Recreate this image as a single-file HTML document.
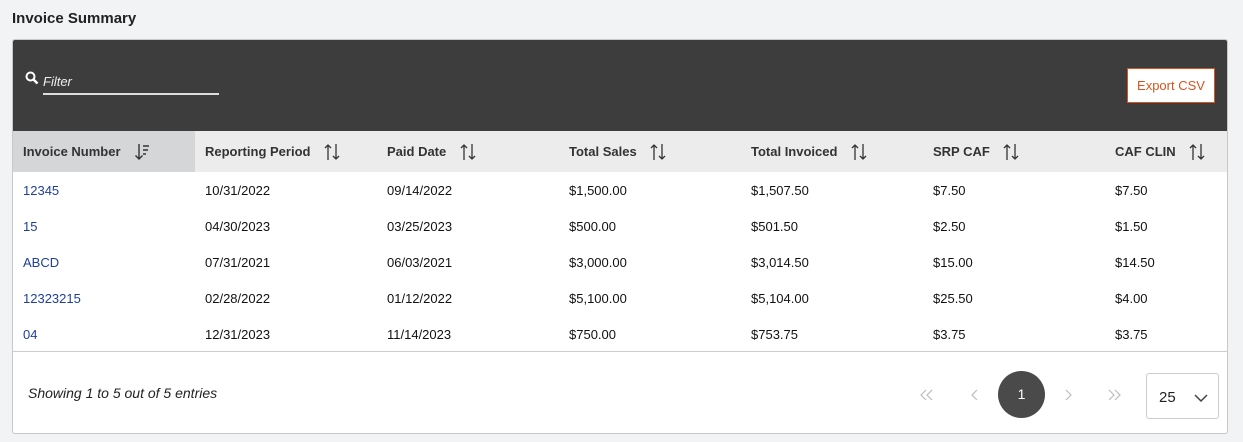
<!DOCTYPE html>
<html><head><style>
*{box-sizing:border-box;margin:0;padding:0}
body{width:1243px;height:442px;background:#f2f3f5;font-family:"Liberation Sans",sans-serif;position:relative;overflow:hidden;color:#222}
h1{position:absolute;left:12px;top:10px;font-size:15px;font-weight:bold;color:#222}
.card{position:absolute;left:12px;top:39px;width:1216px;height:395px;background:#fff;border:1px solid #c8c8c8;border-radius:3px;overflow:hidden}
.bar{height:91px;background:#3d3d3d;position:relative}
.filter{position:absolute;left:30px;top:34px;width:176px;border-bottom:2px solid #ddd;color:#eee;font-style:italic;font-size:13px;padding-bottom:4px}
.srch{position:absolute;left:12px;top:31px}
.exp{position:absolute;left:1114px;top:28px;width:88px;height:35px;background:#fff;border:1px solid #d9531e;color:#d9531e;font-size:13px;text-align:center;line-height:33px}
table{border-collapse:collapse;width:1216px;table-layout:fixed}
th{background:#ececec;height:41px;text-align:left;font-size:13px;font-weight:bold;color:#333;padding-left:10px;padding-top:2px;white-space:nowrap}
th:first-child{background:#d5d6d8}
th svg{vertical-align:middle;margin-left:10px;margin-top:-3px}
td{height:36px;font-size:13px;padding-left:10px;color:#111}
td a{color:#1f3f99;text-decoration:none}
.foot{position:absolute;top:311px;left:0;right:0;bottom:0;border-top:1px solid #ccc}
.show{position:absolute;left:15px;top:33px;font-style:italic;font-size:14px;color:#222}
.pg{position:absolute;top:37px}
.cur{position:absolute;left:985px;top:19px;width:47px;height:47px;border-radius:50%;background:#4a4a4a;color:#fff;text-align:center;line-height:47px;font-size:14px}
.sel{position:absolute;left:1133px;top:21px;width:73px;height:46px;border:1px solid #ccc;border-radius:3px;font-size:15px;padding:15px 0 0 12px}
</style></head><body>
<h1>Invoice Summary</h1>
<div class="card">
<div class="bar">
<svg class="srch" width="14" height="14" viewBox="0 0 14 14"><circle cx="5.5" cy="5.5" r="4" stroke="#fff" stroke-width="2" fill="none"/><line x1="8.5" y1="8.5" x2="12.5" y2="12.5" stroke="#fff" stroke-width="2.5"/></svg>
<div class="filter">Filter</div>
<div class="exp">Export CSV</div>
</div>
<table>
<colgroup><col style="width:182px"><col style="width:182px"><col style="width:182px"><col style="width:182px"><col style="width:182px"><col style="width:182px"><col style="width:124px"></colgroup>
<tr><th>Invoice Number <svg width="16" height="18" viewBox="0 0 16 18"><path d="M5 1v15M1.5 12.5L5 16l3.5-3.5" stroke="#333" stroke-width="1.4" fill="none"/><path d="M9 3h6M9 7h5M9 11h3" stroke="#333" stroke-width="1.4"/></svg></th>
<th>Reporting Period <svg width="16" height="18" viewBox="0 0 16 18"><path d="M4 17V2M1 5l3-3 3 3M12 1v15M9 13l3 3 3-3" stroke="#333" stroke-width="1.3" fill="none"/></svg></th>
<th>Paid Date <svg width="16" height="18" viewBox="0 0 16 18"><path d="M4 17V2M1 5l3-3 3 3M12 1v15M9 13l3 3 3-3" stroke="#333" stroke-width="1.3" fill="none"/></svg></th>
<th>Total Sales <svg width="16" height="18" viewBox="0 0 16 18"><path d="M4 17V2M1 5l3-3 3 3M12 1v15M9 13l3 3 3-3" stroke="#333" stroke-width="1.3" fill="none"/></svg></th>
<th>Total Invoiced <svg width="16" height="18" viewBox="0 0 16 18"><path d="M4 17V2M1 5l3-3 3 3M12 1v15M9 13l3 3 3-3" stroke="#333" stroke-width="1.3" fill="none"/></svg></th>
<th>SRP CAF <svg width="16" height="18" viewBox="0 0 16 18"><path d="M4 17V2M1 5l3-3 3 3M12 1v15M9 13l3 3 3-3" stroke="#333" stroke-width="1.3" fill="none"/></svg></th>
<th>CAF CLIN <svg width="16" height="18" viewBox="0 0 16 18"><path d="M4 17V2M1 5l3-3 3 3M12 1v15M9 13l3 3 3-3" stroke="#333" stroke-width="1.3" fill="none"/></svg></th></tr>
<tr><td><a>12345</a></td><td>10/31/2022</td><td>09/14/2022</td><td>$1,500.00</td><td>$1,507.50</td><td>$7.50</td><td>$7.50</td></tr>
<tr><td><a>15</a></td><td>04/30/2023</td><td>03/25/2023</td><td>$500.00</td><td>$501.50</td><td>$2.50</td><td>$1.50</td></tr>
<tr><td><a>ABCD</a></td><td>07/31/2021</td><td>06/03/2021</td><td>$3,000.00</td><td>$3,014.50</td><td>$15.00</td><td>$14.50</td></tr>
<tr><td><a>12323215</a></td><td>02/28/2022</td><td>01/12/2022</td><td>$5,100.00</td><td>$5,104.00</td><td>$25.50</td><td>$4.00</td></tr>
<tr><td><a>04</a></td><td>12/31/2023</td><td>11/14/2023</td><td>$750.00</td><td>$753.75</td><td>$3.75</td><td>$3.75</td></tr>
</table>
<div class="foot">
<div class="show">Showing 1 to 5 out of 5 entries</div>
<svg class="pg" style="left:907px" width="14" height="12" viewBox="0 0 14 12"><path d="M6 1L1 6l5 5M12 1L7 6l5 5" stroke="#bbb" stroke-width="1.2" fill="none"/></svg>
<svg class="pg" style="left:958px" width="8" height="12" viewBox="0 0 8 12"><path d="M6 1L1 6l5 5" stroke="#bbb" stroke-width="1.2" fill="none"/></svg>
<div class="cur">1</div>
<svg class="pg" style="left:1051px" width="8" height="12" viewBox="0 0 8 12"><path d="M2 1l5 5-5 5" stroke="#bbb" stroke-width="1.2" fill="none"/></svg>
<svg class="pg" style="left:1094px" width="14" height="12" viewBox="0 0 14 12"><path d="M2 1l5 5-5 5M8 1l5 5-5 5" stroke="#bbb" stroke-width="1.2" fill="none"/></svg>
<div class="sel">25 <svg width="14" height="8" style="margin-left:14px;vertical-align:middle" viewBox="0 0 14 8"><path d="M1 1l6 6 6-6" stroke="#444" stroke-width="1.5" fill="none"/></svg></div>
</div>
</div>
</body></html>
